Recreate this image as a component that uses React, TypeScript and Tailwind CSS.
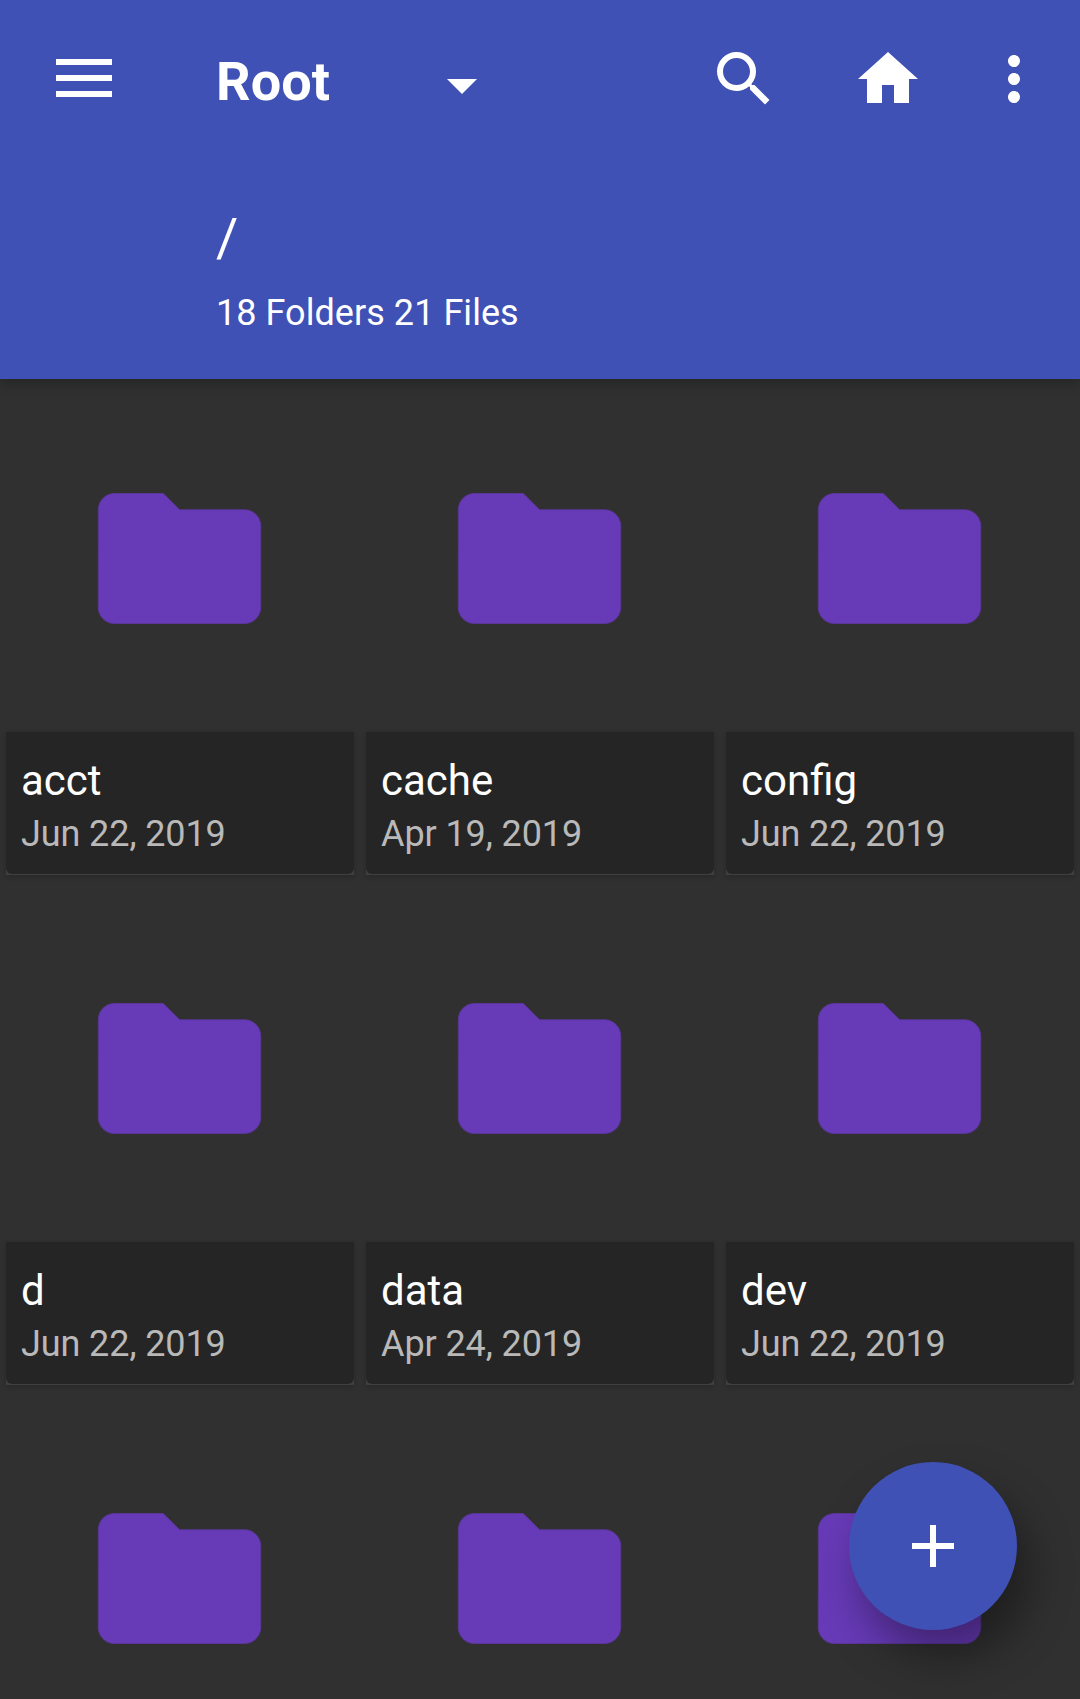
const folders = [
  { name: "acct", date: "Jun 22, 2019" },
  { name: "cache", date: "Apr 19, 2019" },
  { name: "config", date: "Jun 22, 2019" },
  { name: "d", date: "Jun 22, 2019" },
  { name: "data", date: "Apr 24, 2019" },
  { name: "dev", date: "Jun 22, 2019" },
];

function Glyph({ d, className = "size-[72px]" }: { d: string; className?: string }) {
  return (
    <svg viewBox="0 0 24 24" fill="currentColor" className={`block shrink-0 ${className}`}>
      <path d={d} />
    </svg>
  );
}

function FolderIcon() {
  return (
    <svg
      viewBox="0 0 24 24"
      className="block size-[195px] shrink-0 fill-[#673ab7] stroke-[#5a3699]"
      strokeWidth="0.12"
    >
      <path d="M10 4H4c-1.1 0-1.99.9-1.99 2L2 18c0 1.1.9 2 2 2h16c1.1 0 2-.9 2-2V8c0-1.1-.9-2-2-2h-8l-2-2z" />
    </svg>
  );
}

function FolderCard({ name, date }: { name?: string; date?: string }) {
  return (
    <div className="flex h-[510px] flex-col px-1.5">
      <div className="flex h-[347px] shrink-0 items-center justify-center pr-px pb-px">
        <FolderIcon />
      </div>
      {name && (
        <div className="h-[143px] border-b border-[#404040] bg-[#404040] shadow-[0_2px_5px_rgba(0,0,0,0.18)]">
          <div className="h-[142px] rounded-b-[6px] bg-[#252525] pt-6 pr-4 pl-[15px]">
            <div className="h-14 text-[42px] leading-[50px] text-white">{name}</div>
            <div className="text-[36px] leading-[44px] tracking-[-0.1px] text-[#b9b9b9]">{date}</div>
          </div>
        </div>
      )}
    </div>
  );
}

export default function App() {
  return (
    <div className="relative h-[1699px] w-[1080px] overflow-hidden bg-[#303030] font-[Roboto,sans-serif] text-white">
      <header className="relative z-10 h-[379px] bg-[#3f51b5] shadow-[0_4px_12px_rgba(0,0,0,0.25)]">
        <div className="flex h-[158px] items-center pr-[30px] pl-14">
          <button className="mb-0.5 flex w-14 flex-col gap-2.5" aria-label="Menu">
            <span className="h-1.5 bg-white" />
            <span className="h-1.5 bg-white" />
            <span className="h-1.5 bg-white" />
          </button>
          <div className="ml-[104px] flex w-[290px] items-center pt-1.5">
            <span className="w-[231px] text-[54px] leading-[64px] font-bold tracking-[0.1px]">Root</span>
            <svg viewBox="0 0 30 15" className="mt-2 h-[15px] w-[30px] fill-white">
              <path d="M0 0h30L15 15z" />
            </svg>
          </div>
          <div className="ml-auto flex gap-[72px]">
            <Glyph d="M15.5 14h-.79l-.28-.27A6.471 6.471 0 0 0 16 9.5 6.5 6.5 0 1 0 9.5 16c1.61 0 3.09-.59 4.23-1.57l.27.28v.79l5 4.99L20.49 19l-4.99-5zm-6 0C7.01 14 5 11.99 5 9.5S7.01 5 9.5 5 14 7.01 14 9.5 11.99 14 9.5 14z" />
            <Glyph d="M10 20v-6h4v6h5v-8h3L12 3 2 12h3v8z" />
            <Glyph
              className="-ml-[18px] size-[72px]"
              d="M12 8c1.1 0 2-.9 2-2s-.9-2-2-2-2 .9-2 2 .9 2 2 2zm0 2c-1.1 0-2 .9-2 2s.9 2 2 2 2-.9 2-2-.9-2-2-2zm0 6c-1.1 0-2 .9-2 2s.9 2 2 2 2-.9 2-2-.9-2-2-2z"
            />
          </div>
        </div>
        <div className="pt-12 pl-[216px]">
          <div className="text-[54px] leading-[64px]">/</div>
          <div className="mt-[21px] text-[36px] leading-[44px] tracking-[0.05px]">18 Folders 21 Files</div>
        </div>
      </header>

      <main className="grid grid-cols-3 pt-[6px]">
        {folders.map((f) => (
          <FolderCard key={f.name} name={f.name} date={f.date} />
        ))}
        <FolderCard />
        <FolderCard />
        <FolderCard />
      </main>

      <button
        aria-label="Add"
        className="absolute top-[1462px] left-[849px] z-20 flex size-[168px] items-center justify-center rounded-full bg-[#3f51b5] shadow-[12px_26px_44px_rgba(0,0,0,0.38)]"
      >
        <Glyph d="M19 13h-6v6h-2v-6H5v-2h6V5h2v6h6v2z" />
      </button>
    </div>
  );
}
